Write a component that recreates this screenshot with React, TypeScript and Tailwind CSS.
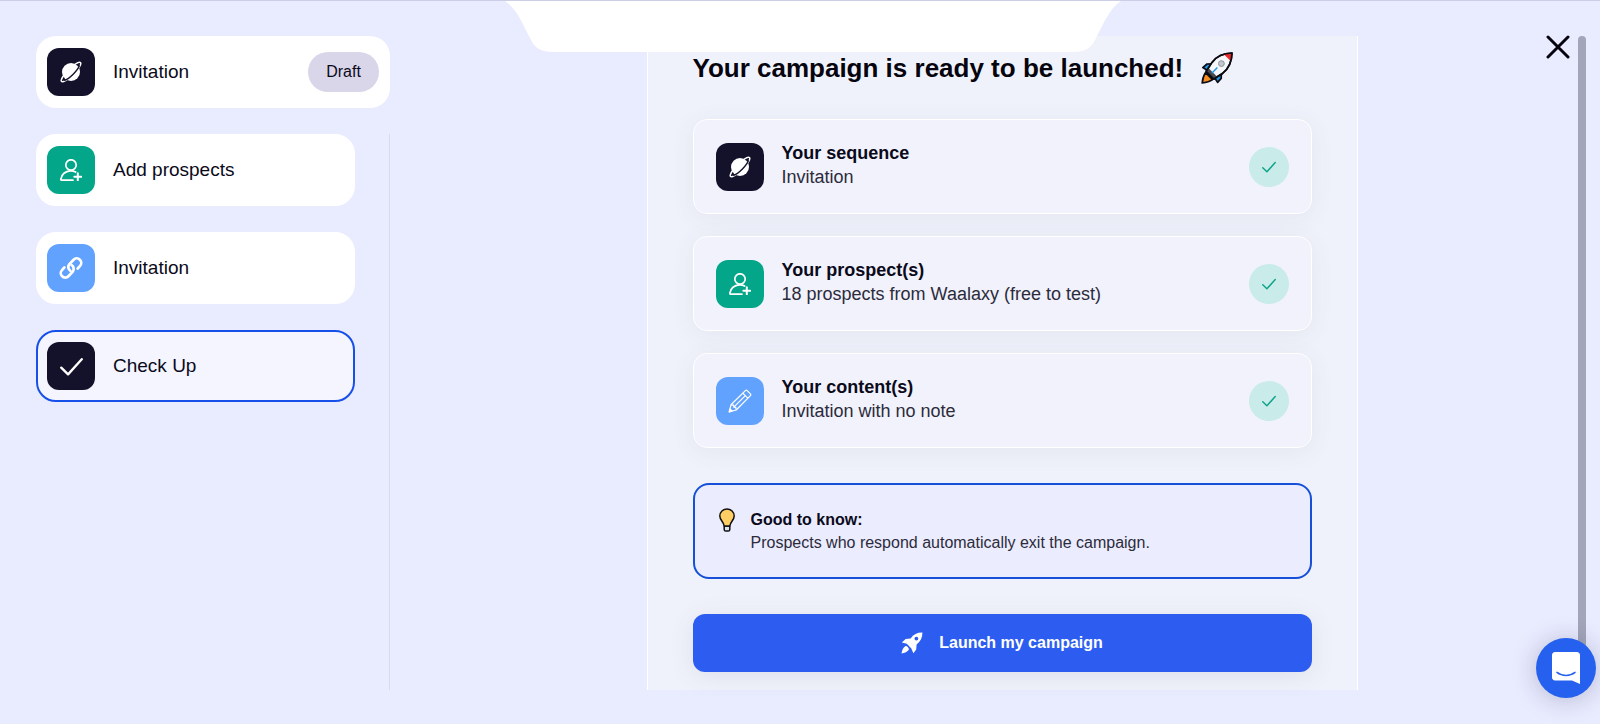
import type { ReactNode } from "react";

interface StepProps {
  label: string;
  icon: ReactNode;
  tile: string;
  active?: boolean;
}

interface SummaryCardProps {
  title: string;
  detail: string;
  icon: ReactNode;
  tile: string;
}

function PlanetIcon() {
  return (
    <svg viewBox="0 0 22 22" className="size-[22px]" fill="none" aria-hidden="true">
      <ellipse cx="11" cy="11" rx="13.4" ry="3.2" transform="rotate(-45 11 11)" stroke="#fff" strokeWidth="1.4" />
      <circle cx="11" cy="11" r="9" fill="#fff" />
      {/* front half of the ring, cut out of the planet */}
      <path d="M19.6 4.2C17.6 9.6 9.6 17.6 4.2 19.6" stroke="#14122b" strokeWidth="1.4" />
    </svg>
  );
}

function ProspectIcon() {
  return (
    <svg
      viewBox="0 0 22 22"
      className="size-[22px]"
      fill="none"
      stroke="#fff"
      strokeWidth="1.7"
      strokeLinecap="round"
      strokeLinejoin="round"
      aria-hidden="true"
    >
      <circle cx="11" cy="6" r="5.2" />
      <path d="M13 21.2H1.4C.8 21.2.8 20.6.9 20C1.5 15.4 5.4 12 10.2 11.8C12.3 11.7 14 12 15.6 13" />
      <path d="M17.8 14.3V21.3M14.3 17.8H21.3" strokeWidth="2" />
    </svg>
  );
}

function LinkIcon() {
  return (
    <svg
      viewBox="0 0 24 24"
      className="size-[24px]"
      fill="none"
      stroke="#fff"
      strokeWidth="2.7"
      strokeLinecap="round"
      strokeLinejoin="round"
      aria-hidden="true"
    >
      <path d="M11.4 14.8A4.4 4.4 0 0 1 10.2 8.4L14.6 3.8A4.4 4.4 0 0 1 21 9.9L18.6 12.6" />
      <path d="M12.6 9.2A4.4 4.4 0 0 1 13.8 15.6L9.4 20.2A4.4 4.4 0 0 1 3 14.1L5.4 11.4" />
    </svg>
  );
}

function PencilIcon() {
  return (
    <svg
      viewBox="0 0 24 24"
      className="size-[24px]"
      fill="none"
      stroke="#fff"
      strokeWidth="1.2"
      strokeLinejoin="round"
      aria-hidden="true"
    >
      <path d="M3 15.8L17.4 1.6C17.9 1.1 18.7 1.1 19.2 1.6L22.4 4.8C22.9 5.3 22.9 6.1 22.4 6.6L8.2 21L1.2 22.8Z" />
      <path d="M14.8 4.2L19.8 9.2M3 15.8L5.6 16.2L5.8 18.2L7.8 18.4L8.2 21M5.8 18.2L17.3 6.7" />
      <path d="M1.2 22.8L2 19.8L4.2 22Z" fill="#fff" />
    </svg>
  );
}

function CheckIcon({ className }: { className: string }) {
  return (
    <svg
      viewBox="0 0 24 24"
      className={className}
      fill="none"
      stroke="currentColor"
      strokeWidth="2.4"
      strokeLinecap="round"
      strokeLinejoin="round"
      aria-hidden="true"
    >
      <path d="M1.3 13.2L8.4 20.2L22.7 4.4" />
    </svg>
  );
}

function RocketIcon() {
  return (
    <svg viewBox="0 0 22 22" className="size-[22px]" fill="#fff" aria-hidden="true">
      <path
        fillRule="evenodd"
        d="M21.4.6C16.4.5 12.4 2.4 9.6 6.4L4.6 7L.8 10.6L5.8 11.8L10.2 16.2L12.4 21.2L15.2 17.4L15.6 12.4C19.6 9.6 21.5 5.6 21.4.6ZM15.4 4.7A1.9 1.9 0 1 0 15.4 8.5A1.9 1.9 0 1 0 15.4 4.7Z"
      />
      <path d="M4.2 14.2C5.6 13.4 8.6 16.4 7.8 17.8C6.8 19.8 3.6 21 .5 21.5C1 18.4 2.2 15.2 4.2 14.2Z" />
    </svg>
  );
}

function RocketEmoji() {
  return (
    <svg
      viewBox="0 0 32 32"
      className="size-8"
      stroke="#0c0c12"
      strokeWidth="1.7"
      strokeLinejoin="round"
      role="img"
      aria-label="rocket"
    >
      <path d="M4.6 20.6C2.6 23.4 1.6 27 1.2 31C5 30.6 8.8 29.6 11.6 27.6Z" fill="#f58a1f" />
      <path d="M12.6 11.8L6 12L1.8 15.6L5 17.4L6.4 20.6Z" fill="#1f95e6" />
      <path d="M20.4 20L20.2 26.4L16.6 30.4L14.6 27.2L11.4 25.8Z" fill="#1f95e6" />
      <path d="M31 1C22.4 1.2 15.4 4.4 11 10.4L5.2 19.4L12.8 27L21.8 21.2C27.6 16.6 30.8 9.6 31 1Z" fill="#f5f7fb" />
      <path d="M31 1C28.2 1 25.4 1.5 23 2.4L29.6 9C30.5 6.6 31 3.8 31 1Z" fill="#ee2b2b" stroke="none" />
      <path d="M7.4 16L5.2 19.4L12.8 27L16.2 24.8Z" fill="#474b52" stroke="none" />
      <circle cx="20.4" cy="11.6" r="2.9" fill="#c3c8cf" stroke="#8c9299" strokeWidth="1" />
      <path d="M11 21L16.4 15.6" stroke="#1f95e6" strokeWidth="1.4" />
      <path d="M31 1C22.4 1.2 15.4 4.4 11 10.4L5.2 19.4L12.8 27L21.8 21.2C27.6 16.6 30.8 9.6 31 1Z" fill="none" />
    </svg>
  );
}

function BulbIcon() {
  return (
    <svg viewBox="0 0 16 24" className="h-6 w-4 shrink-0" stroke="#111" strokeWidth="1.5" strokeLinejoin="round" aria-hidden="true">
      <path d="M5.2 18H10.8V21.4C10.8 22.4 10.2 23 9.2 23H6.8C5.8 23 5.2 22.4 5.2 21.4Z" fill="#dfe3ee" />
      <path
        d="M8 .9C4 .9.8 4 .8 8C.8 12 4.6 13.6 5.2 18H10.8C11.4 13.6 15.2 12 15.2 8C15.2 4 12 .9 8 .9Z"
        fill="#ffcf66"
      />
    </svg>
  );
}

function Step({ label, icon, tile, active = false }: StepProps) {
  return (
    <li>
      <button
        type="button"
        aria-current={active ? "step" : undefined}
        className={`flex h-[72px] w-full items-center gap-[18px] rounded-[20px] border-2 px-[9px] text-left text-[19px] text-[#0b0a1a] ${
          active ? "border-[#1650e8] bg-[#f4f5ff]" : "border-white bg-white"
        }`}
      >
        <span className={`flex size-12 shrink-0 items-center justify-center rounded-xl ${tile}`}>{icon}</span>
        {label}
      </button>
    </li>
  );
}

function SummaryCard({ title, detail, icon, tile }: SummaryCardProps) {
  return (
    <article className="flex h-[95px] items-center gap-[18px] rounded-[14px] border border-white bg-[#f1f2fc] px-[22px] shadow-[0_4px_24px_rgba(60,60,90,0.07)]">
      <span className={`flex size-12 shrink-0 items-center justify-center rounded-xl ${tile}`}>{icon}</span>
      <div className="flex-1 pb-1 text-lg leading-6">
        <h2 className="font-bold text-[#0b0a1a]">{title}</h2>
        <p className="text-[#2c2b3b]">{detail}</p>
      </div>
      <span className="flex size-10 items-center justify-center rounded-full bg-[#c9ebe9] text-[#0aa287]">
        <CheckIcon className="size-[14px]" />
      </span>
    </article>
  );
}

export default function App() {
  return (
    <div className="relative flex min-h-screen border-t border-[#cccee6] bg-[#e9ebff] pt-[35px] pr-[14px] pb-[34px] pl-9 font-['Liberation_Sans',Arial,sans-serif]">
      <aside className="flex w-[354px] shrink-0 flex-col gap-[26px]">
        <header className="flex h-[72px] items-center gap-[18px] rounded-[20px] bg-white px-[11px] text-[19px] text-[#0b0a1a]">
          <span className="flex size-12 shrink-0 items-center justify-center rounded-xl bg-[#14122b]">
            <PlanetIcon />
          </span>
          <span className="flex-1">Invitation</span>
          <span className="flex h-10 w-[71px] items-center justify-center rounded-full bg-[#dad6ea] text-base">
            Draft
          </span>
        </header>
        <nav className="flex-1 border-r border-[#d8daf0] pr-[34px]">
          <ul className="flex flex-col gap-[26px]">
            <Step label="Add prospects" icon={<ProspectIcon />} tile="bg-[#03a688]" />
            <Step label="Invitation" icon={<LinkIcon />} tile="bg-[#62a2ff]" />
            <Step
              label="Check Up"
              icon={<CheckIcon className="size-[23px] text-white" />}
              tile="bg-[#14122b]"
              active
            />
          </ul>
        </nav>
      </aside>

      <main className="flex flex-1 justify-center pl-9">
        <section className="flex w-full max-w-[711px] flex-col border-x border-white bg-[#f0f2fb] px-[45px] pt-[14px]">
          <h1 className="flex items-center gap-[18px] text-[26px] leading-9 font-bold text-[#06050f]">
            Your campaign is ready to be launched!
            <RocketEmoji />
          </h1>
          <div className="mt-[33px] flex flex-col gap-[22px]">
            <SummaryCard title="Your sequence" detail="Invitation" icon={<PlanetIcon />} tile="bg-[#14122b]" />
            <SummaryCard
              title="Your prospect(s)"
              detail="18 prospects from Waalaxy (free to test)"
              icon={<ProspectIcon />}
              tile="bg-[#03a688]"
            />
            <SummaryCard
              title="Your content(s)"
              detail="Invitation with no note"
              icon={<PencilIcon />}
              tile="bg-[#62a2ff]"
            />
          </div>
          <div className="mt-[35px] flex items-start gap-4 rounded-2xl border-2 border-[#1650d8] bg-[#ebedff] px-6 py-[23px]">
            <BulbIcon />
            <div className="text-base leading-[23px]">
              <h2 className="font-bold text-[#0b0a1a]">Good to know:</h2>
              <p className="text-[#2c2b3b]">Prospects who respond automatically exit the campaign.</p>
            </div>
          </div>
          <button
            type="button"
            className="mt-[35px] flex h-[58px] items-center justify-center gap-4 rounded-xl bg-[#2d5df0] text-base font-bold text-white shadow-[0_4px_24px_rgba(60,60,90,0.1)]"
          >
            <RocketIcon />
            Launch my campaign
          </button>
        </section>
      </main>

      <div className="w-2 rounded-full bg-[#a3a5ba]" />

      <svg
        viewBox="0 0 616 51"
        className="absolute top-0 left-[505px] h-[51px] w-[616px]"
        fill="#fff"
        aria-hidden="true"
      >
        <path d="M0 0C12 8 17 22 24 35C29 46 34 51 48 51H568C582 51 587 46 592 35C599 22 604 8 616 0Z" />
      </svg>

      <button type="button" aria-label="Close" className="absolute top-[34px] right-[30px]">
        <svg viewBox="0 0 24 24" className="size-6" stroke="#06050f" strokeWidth="3" strokeLinecap="round" aria-hidden="true">
          <path d="M2 2L22 22M22 2L2 22" />
        </svg>
      </button>

      <button
        type="button"
        aria-label="Open chat"
        className="fixed right-1 bottom-[26px] flex size-[60px] items-center justify-center rounded-full bg-[#2560ee] shadow-[0_2px_24px_rgba(40,40,80,0.25)]"
      >
        <svg viewBox="0 0 28 32" className="h-8 w-7" fill="none" aria-hidden="true">
          <path d="M3 0H25C26.6 0 28 1.4 28 3V32L20 28.4H3C1.4 28.4 0 27 0 25.4V3C0 1.4 1.4 0 3 0Z" fill="#fff" />
          <path d="M5 20.4C10 24.4 18 24.4 23 20.4" stroke="#2560ee" strokeWidth="1.5" strokeLinecap="round" />
        </svg>
      </button>
    </div>
  );
}
